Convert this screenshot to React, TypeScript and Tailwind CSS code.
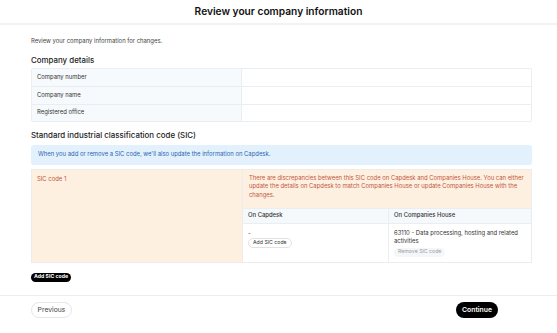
import React from "react";

export default function App() {
  return (
    <div className="w-[557px] h-[333px] bg-white overflow-hidden text-[#1f2328]" style={{ fontFamily: "Inter, 'Noto Sans', sans-serif" }}>
      <header className="h-[25px] flex items-center justify-center border-b-2 border-[#f2f2f2]">
        <h1 className="text-[10.2px] font-semibold text-[#111]">Review your company information</h1>
      </header>
      <main className="pl-[31px] pr-[25px] pt-[12px]">
        <p className="text-[5.9px] leading-[8px] text-[#444]">Review your company information for changes.</p>
        <h2 className="mt-[10px] text-[7.9px] leading-[10px] font-medium text-[#222]">Company details</h2>
        <div className="mt-[3px] border border-[#e9eef3] rounded-[2px]">
          {["Company number", "Company name", "Registered office"].map((l, i) => (
            <div key={l} className={`flex h-[17.3px] ${i > 0 ? "border-t border-[#e9eef3]" : ""}`}>
              <div className="w-[210px] shrink-0 bg-[#f7fafc] border-r border-[#e9eef3] flex items-center px-[5px] text-[5.9px] text-[#333]">{l}</div>
              <div className="flex-1 bg-white" />
            </div>
          ))}
        </div>
        <h2 className="mt-[8px] text-[7.9px] leading-[10px] font-medium text-[#222]">Standard industrial classification code (SIC)</h2>
        <div className="mt-[5px] h-[20px] rounded-[3px] bg-[#e3f1fd] flex items-center px-[7px] text-[5.9px] text-[#2d64b0]">
          When you add or remove a SIC code, we'll also update the information on Capdesk.
        </div>
        <div className="mt-[4px] flex border border-[#ececec] h-[94px]">
          <div className="w-[210px] shrink-0 bg-[#fdf0e1] px-[5px] pt-[5px] text-[5.9px] leading-[8px] text-[#c2573d]">SIC code 1</div>
          <div className="flex-1 min-w-0 flex flex-col border-l border-[#ececec]">
            <div className="h-[38px] bg-[#fdf0e1] px-[6px] pt-[4px] text-[5.9px] leading-[8.5px] text-[#c2573d]">
              There are discrepancies between this SIC code on Capdesk and Companies House. You can either update the details on Capdesk to match Companies House or update Companies House with the changes.
            </div>
            <div className="flex h-[16px] bg-[#f6f9fc] border-t border-b border-[#e9eef3] text-[5.9px] text-[#333] font-medium">
              <div className="w-[146px] shrink-0 flex items-center px-[5px] border-r border-[#e9eef3]">On Capdesk</div>
              <div className="flex-1 flex items-center px-[5px]">On Companies House</div>
            </div>
            <div className="flex flex-1 text-[5.9px] text-[#333]">
              <div className="w-[146px] shrink-0 px-[5px] pt-[5px] border-r border-[#e9eef3]">
                <div className="leading-[8px]">-</div>
                <div className="mt-[1px] inline-flex items-center h-[10px] px-[4px] rounded-full border border-[#e2e2e2] text-[5.2px] text-[#333]">Add SIC code</div>
              </div>
              <div className="flex-1 px-[5px] pt-[5px]">
                <div className="leading-[8.5px] w-[140px]">63110 - Data processing, hosting and related activities</div>
                <div className="mt-[2px] inline-flex items-center h-[9px] px-[4px] rounded-full bg-[#f4f6f8] text-[5.2px] text-[#9aa0a6]">Remove SIC code</div>
              </div>
            </div>
          </div>
        </div>
        <div className="mt-[10px] flex">
          <div className="inline-flex items-center h-[9px] px-[3px] rounded-full bg-black text-white text-[5.2px] font-bold">Add SIC code</div>
        </div>
      </main>
      <footer className="mt-[13px] border-t border-[#ededed] flex items-center justify-between pl-[31px] pr-[59px] pt-[6px]">
        <button className="h-[16px] w-[41px] rounded-full border border-[#e6e6e6] text-[6.8px] text-[#444] flex items-center justify-center">Previous</button>
        <button className="h-[16px] w-[42px] rounded-full bg-black text-white text-[6.8px] font-semibold flex items-center justify-center">Continue</button>
      </footer>
    </div>
  );
}
